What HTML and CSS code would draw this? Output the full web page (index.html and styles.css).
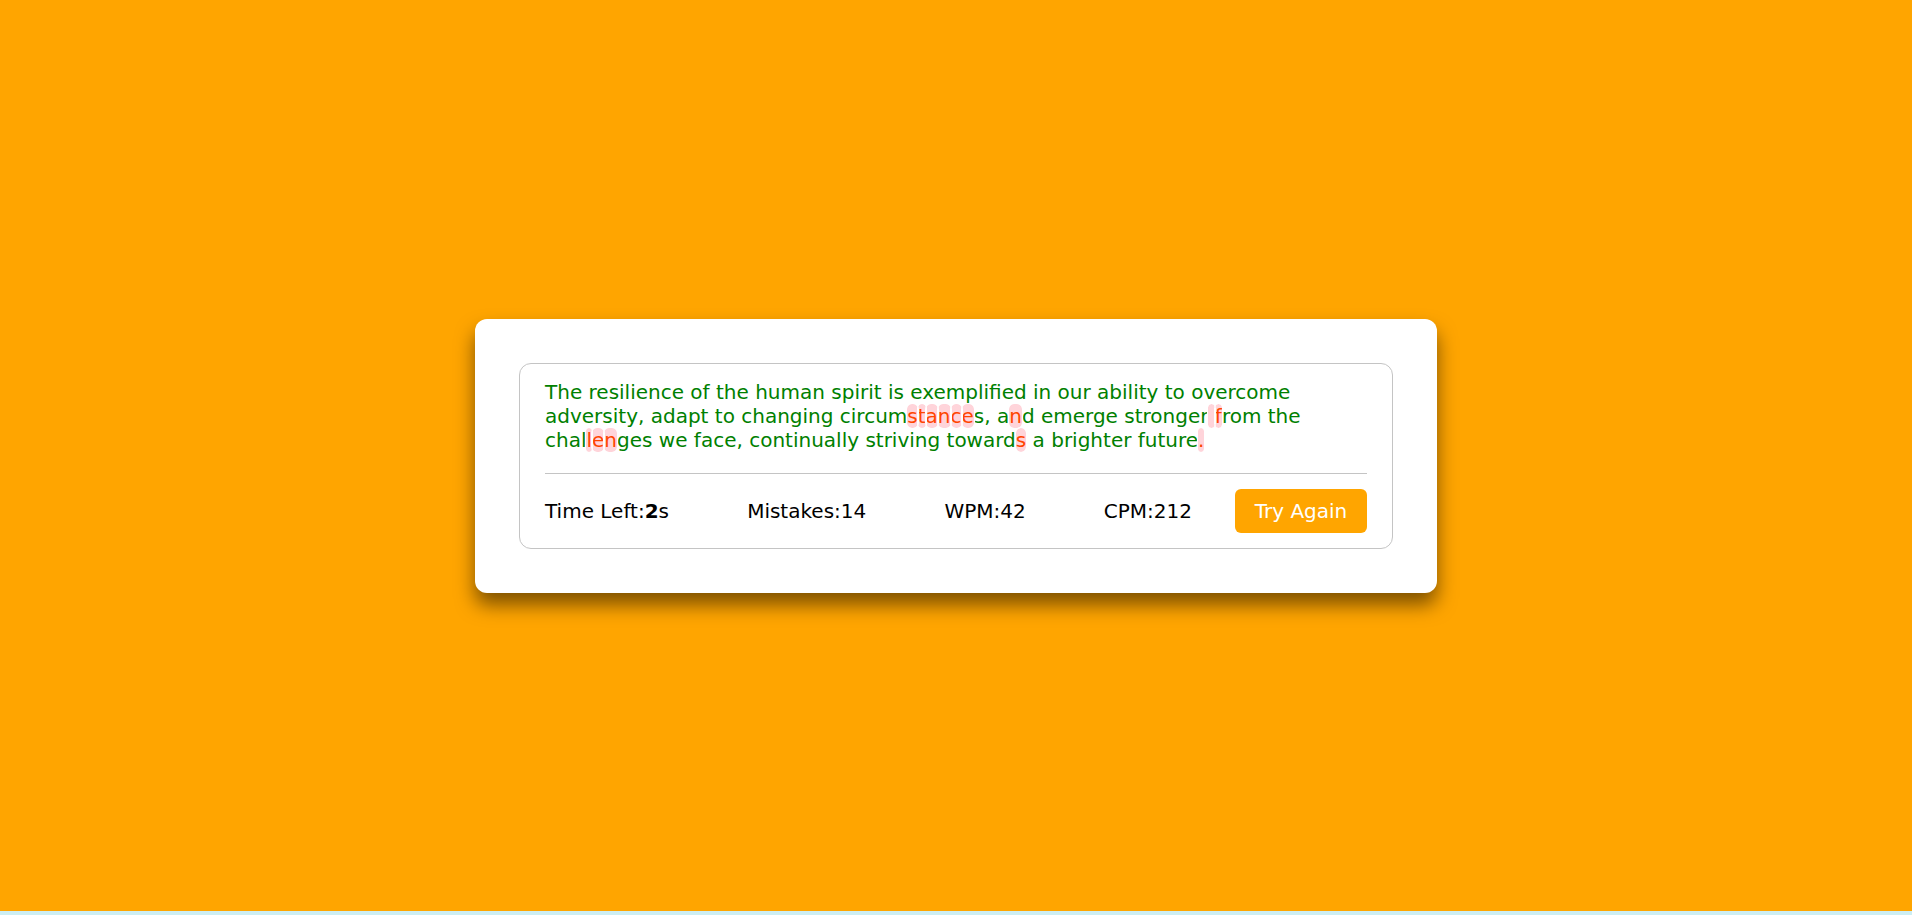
FILE: index.html
```html
<!DOCTYPE html>
<html lang="en">
<head>
<meta charset="utf-8">
<title>Typing Test</title>
<link rel="stylesheet" href="styles.css">
</head>
<body>
<div class="page">
  <div class="card">
    <div class="content-box">
      <p class="typing-text">The resilience of the human spirit is exemplified in our ability to overcome adversity, adapt to changing circum<span class="bad">s</span><span class="bad">t</span><span class="bad">a</span><span class="bad">n</span><span class="bad">c</span><span class="bad">e</span>s, a<span class="bad">n</span>d emerge stronger<span class="bad"> </span><span class="bad">f</span>rom the chal<span class="bad">l</span><span class="bad">e</span><span class="bad">n</span>ges we face, continually striving toward<span class="bad">s</span> a brighter future<span class="bad">.</span></p>
      <div class="content">
        <ul class="stats">
          <li>Time Left:<b>2</b>s</li>
          <li>Mistakes:14</li>
          <li>WPM:42</li>
          <li>CPM:212</li>
        </ul>
        <button class="retry">Try Again</button>
      </div>
    </div>
  </div>
</div>
</body>
</html>
```

FILE: styles.css
```css
html {
  background: #cdeef3;
}
body {
  margin: 0;
  font-family: "DejaVu Sans", Verdana, sans-serif;
}
.page {
  height: 911px;
  background: #ffa500;
  display: flex;
  align-items: center;
  justify-content: center;
}
.card {
  box-sizing: border-box;
  width: 962px;
  padding: 44px;
  background: #fff;
  border-radius: 12px;
  box-shadow: 0 12px 19px rgba(0, 0, 0, 0.5);
}
.content-box {
  border: 1px solid #c4c4c4;
  border-radius: 12px;
  padding: 16px 25px 0;
}
.typing-text {
  margin: 0;
  font-size: 20px;
  line-height: normal;
  color: #008000;
}
.bad {
  color: #ff4500;
  background: #ffd4da;
  outline: 1px solid #fff;
  border-radius: 5px;
}
.content {
  margin-top: 21px;
  border-top: 1px solid #c4c4c4;
  padding: 15px 0;
  display: flex;
  align-items: center;
  justify-content: space-between;
}
.stats {
  margin: 0;
  padding: 0;
  list-style: none;
  width: 647px;
  display: flex;
  justify-content: space-between;
  font-size: 20px;
  color: #000;
}
.retry {
  width: 132px;
  height: 44px;
  border: none;
  border-radius: 6px;
  background: #ffa500;
  color: #fff;
  font-family: "DejaVu Sans", Verdana, sans-serif;
  font-size: 20px;
  padding: 0;
  cursor: pointer;
}
```
